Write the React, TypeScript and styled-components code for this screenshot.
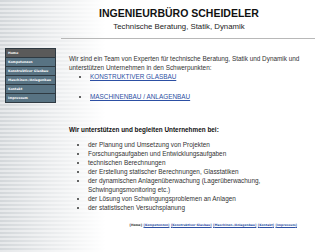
import React from 'react';
import styled, { createGlobalStyle } from 'styled-components';

const GlobalStyle = createGlobalStyle`
    html, body {
        margin: 0;
        padding: 0;
        width: 336px;
        height: 252px;
        overflow: hidden;
    }
    body {
        font-family: 'Liberation Sans', Arial, sans-serif;
        color: #333;
        background-color: #fff;
        background-image:
            linear-gradient(to right, rgba(255, 255, 255, 0) 0px, rgba(255, 255, 255, 0.5) 50px, #fff 105px),
            repeating-linear-gradient(to bottom, #d3d7da 0px, #d3d7da 2px, #e6e8ea 2px, #e6e8ea 4px);
    }
`;

const Seite = styled.div`
    display: flex;
    align-items: flex-start;
    height: 252px;
`;

const Sidebar = styled.nav`
    width: 49px;
    margin: 48px 0 0 5px;
    display: flex;
    flex-direction: column;
    gap: 1px;
    background: #2f3a42;
    padding: 1px;
`;

const MenyPunkt = styled.div<{ $aktiv?: boolean }>`
    height: 8px;
    line-height: 8px;
    padding-left: 2px;
    font-family: 'DejaVu Sans', Verdana, sans-serif;
    font-size: 3.2px;
    font-weight: bold;
    color: #fff;
    white-space: nowrap;
    background: ${(p) => (p.$aktiv ? '#5a5a5a' : '#587383')};
`;

const Hoved = styled.main`
    flex: 1;
    padding: 0 21px 0 5px;
`;

const Header = styled.header`
    text-align: center;
    padding: 7px 18px 0 0;
`;

const Tittel = styled.h1`
    margin: 0;
    font-size: 10.5px;
    line-height: 13px;
    font-weight: bold;
    color: #111;
`;

const Undertittel = styled.h2`
    margin: 1px 0 0;
    font-size: 7.8px;
    line-height: 12px;
    font-weight: normal;
    color: #222;
`;

const Linje = styled.hr`
    border: none;
    border-top: 1px solid #b8b8b8;
    margin: 5px 0 0;
`;

const Innhold = styled.section`
    padding-left: 8px;
    font-size: 6.4px;
    line-height: 9px;
`;

const Avsnitt = styled.p`
    margin: 15px 0 0;
`;

const LenkeListe = styled.ul`
    margin: 0;
    padding-left: 21px;
    list-style: disc;
`;

const LenkePunkt = styled.li<{ $forste?: boolean }>`
    margin-top: ${(p) => (p.$forste ? '0' : '11px')};
`;

const Lenke = styled.a`
    color: #2c4fa3;
    text-decoration: underline;
`;

const Overskrift = styled.p`
    margin: 24px 0 0;
    font-weight: bold;
    color: #111;
`;

const Punktliste = styled.ul`
    margin: 6px 0 0;
    padding-left: 19px;
    list-style: disc;
`;

const Fot = styled.footer`
    margin-top: 10px;
    text-align: center;
    font-family: 'DejaVu Sans', Verdana, sans-serif;
    font-size: 3px;
    font-weight: bold;
    line-height: 6px;
    padding-left: 44px;
`;

const FotLenke = styled.a<{ $aktiv?: boolean }>`
    color: ${(p) => (p.$aktiv ? '#222' : '#2c4fa3')};
    text-decoration: ${(p) => (p.$aktiv ? 'none' : 'underline')};
    margin-right: 1.5px;
`;

const menyPunkter = [
    'Home',
    'Kompetenzen',
    'Konstruktiver Glasbau',
    'Maschinen-/Anlagenbau',
    'Kontakt',
    'Impressum',
];

const punkter = [
    'der Planung und Umsetzung von Projekten',
    'Forschungsaufgaben und Entwicklungsaufgaben',
    'technischen Berechnungen',
    'der Erstellung statischer Berechnungen, Glasstatiken',
    'der dynamischen Anlagenüberwachung (Lagerüberwachung, Schwingungsmonitoring etc.)',
    'der Lösung von Schwingungsproblemen an Anlagen',
    'der statistischen Versuchsplanung',
];

export default function App() {
    return (
        <>
            <GlobalStyle />
            <Seite>
                <Sidebar>
                    {menyPunkter.map((navn, i) => (
                        <MenyPunkt key={navn} $aktiv={i === 0}>
                            {navn}
                        </MenyPunkt>
                    ))}
                </Sidebar>
                <Hoved>
                    <Header>
                        <Tittel>INGENIEURBÜRO SCHEIDELER</Tittel>
                        <Undertittel>Technische Beratung, Statik, Dynamik</Undertittel>
                    </Header>
                    <Linje />
                    <Innhold>
                        <Avsnitt>
                            Wir sind ein Team von Experten für technische Beratung, Statik und Dynamik und
                            unterstützen Unternehmen in den Schwerpunkten:
                        </Avsnitt>
                        <LenkeListe>
                            <LenkePunkt $forste>
                                <Lenke href="#">KONSTRUKTIVER GLASBAU</Lenke>
                            </LenkePunkt>
                            <LenkePunkt>
                                <Lenke href="#">MASCHINENBAU / ANLAGENBAU</Lenke>
                            </LenkePunkt>
                        </LenkeListe>
                        <Overskrift>Wir unterstützen und begleiten Unternehmen bei:</Overskrift>
                        <Punktliste>
                            {punkter.map((p) => (
                                <li key={p}>{p}</li>
                            ))}
                        </Punktliste>
                        <Fot>
                            {menyPunkter.map((navn, i) => (
                                <FotLenke key={navn} href="#" $aktiv={i === 0}>
                                    [{navn}]
                                </FotLenke>
                            ))}
                        </Fot>
                    </Innhold>
                </Hoved>
            </Seite>
        </>
    );
}
